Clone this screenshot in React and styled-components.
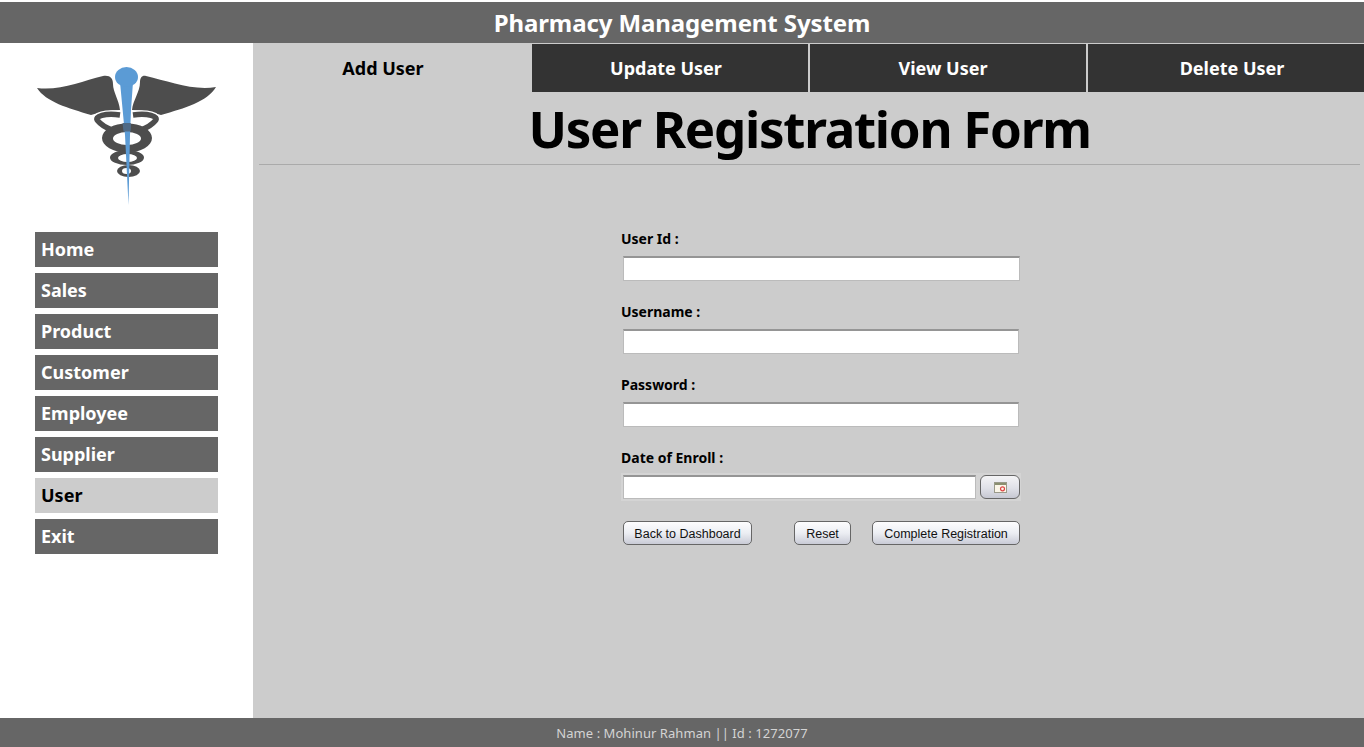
import React from "react";
import styled, { createGlobalStyle } from "styled-components";

const Global = createGlobalStyle`
  html, body { margin: 0; padding: 0; background: #fff; overflow: hidden; }
  * { box-sizing: border-box; }
`;
const font = `"Noto Sans", "DejaVu Sans", sans-serif`;

const Page = styled.div`
  width: 1364px; height: 747px; padding-top: 2px;
  display: flex; flex-direction: column;
  font-family: ${font};
`;
const Header = styled.header`
  height: 41px; flex: none; background: #666; color: #fff;
  display: flex; align-items: center; justify-content: center;
  font-size: 24px; letter-spacing: -0.1px; font-weight: 700;
`;
const Body = styled.div`flex: 1; display: flex; min-height: 0;`;
const Sidebar = styled.aside`
  width: 253px; flex: none; background: #fff;
  display: flex; flex-direction: column; padding: 24px 35px 0;
`;
const LogoSvg = styled.svg`
  display: block; width: 180px; height: 140px; margin: 0 0 25px 1px; flex: none;
`;
const Nav = styled.nav`display: flex; flex-direction: column; gap: 6px;`;
const NavItem = styled.div`
  width: 183px; height: 35px; padding: 0 0 2px 6px;
  display: flex; align-items: center;
  font-size: 18px; font-weight: 700;
  background: ${p => (p.$active ? "#ccc" : "#666")};
  color: ${p => (p.$active ? "#000" : "#fff")};
`;
const Main = styled.main`
  flex: 1; background: #ccc; display: flex; flex-direction: column; min-width: 0;
`;
const Tabs = styled.div`
  display: grid; grid-template-columns: 277px 276px 276px 276px; column-gap: 2px;
  height: 48px; margin-top: 1px; flex: none;
  & > :first-child { margin-right: -2px; }
`;
const Tab = styled.div`
  display: flex; align-items: center; justify-content: center;
  font-size: 18px; font-weight: 700;
  background: ${p => (p.$active ? "#ccc" : "#333")};
  color: ${p => (p.$active ? "#000" : "#fff")};
  padding: ${p => p.$pad || "0"};
`;
const Title = styled.h1`
  margin: 0 4px 0 6px; height: 73px; padding: 4px 0 0; flex: none;
  border-bottom: 1px solid #aaa;
  font-size: 51px; letter-spacing: -1.27px; line-height: 64px; font-weight: 700; color: #000; text-align: center;
`;
const Form = styled.form`
  width: 400px; margin: 65px 0 0 368px;
  display: flex; flex-direction: column;
`;
const Field = styled.div`
  display: flex; flex-direction: column; height: 73px;
`;
const Label = styled.label`
  font-size: 14px; font-weight: 700; color: #000; line-height: 17px; height: 17px;
`;
const Input = styled.div`
  height: 25px; width: ${p => p.$w || 397}px; margin: 9px 0 0 2px;
  background: #fff; border: 1px solid #bbb; border-top: 2px solid #959595;
`;
const DateRow = styled.div`
  display: flex; align-items: center; justify-content: space-between;
  height: 28px; width: 400px; margin-top: 7px; padding: 0 1px 0 2px; background: #d4d4d4;
`;
const DateInput = styled.div`
  width: 353px; height: 24px; background: #fff;
  border: 1px solid #bbb; border-top: 2px solid #959595;
`;
const IconButton = styled.button`
  width: 40px; height: 24px; padding: 0; display: flex; align-items: center; justify-content: center;
  border: 1px solid #666; border-radius: 6px;
  background: linear-gradient(#f4f4f6, #e0e1e8 55%, #c6c8d2);
`;
const Actions = styled.div`
  display: flex; margin: 20px 0 0 2px; width: 397px;
`;
const Btn = styled.button`
  height: 24px; width: ${p => p.$w}px; margin-left: ${p => p.$ml || 0}px; padding: 1px 0 0;
  border: 1px solid #666; border-radius: 5px;
  background: linear-gradient(#fdfdfe, #eceef3 50%, #c9cbd6);
  font-family: "Liberation Sans", Arial, sans-serif; font-size: 12.5px; color: #111;
`;
const Footer = styled.footer`
  height: 29px; flex: none; background: #666; color: #d4d4d4;
  display: flex; align-items: center; justify-content: center;
  font-size: 13px; padding-top: 1px; letter-spacing: 0.05px;
`;

const bowl = "M120 115C106 113 93 116 98 121C102 126 107 128 112 130M133 115C147 113 160 116 155 121C151 126 146 128 141 130";

const Logo = () => (
  <LogoSvg viewBox="36 67 180 140" aria-label="logo">
    <path fill="#4d4d4d" d="M37 88C60 91 82 81 103 76C110 75 113 78 113 84C113 92 119 100 120 110C110 110 100 112 91 115C68 108 46 102 37 88Z" />
    <path fill="#4d4d4d" d="M216 87C193 91 168 81 146 76C142 75 140 78 140 82C140 92 133 100 132 110C142 110 152 112 161 115C185 108 207 102 216 87Z" />
    <path fill="none" stroke="#fff" strokeWidth="8" d={bowl} />
    <path fill="none" stroke="#4d4d4d" strokeWidth="5.5" d={bowl} />
    <path fill="#4d4d4d" fillRule="evenodd" d="M102 138a25 14.5 0 1 0 50 0a25 14.5 0 1 0 -50 0ZM113 138.500a14 6.500 0 1 1 28 0a14 6.500 0 1 1 -28 0Z" />
    <path fill="#4d4d4d" fillRule="evenodd" d="M110 157.500a17 7.500 0 1 0 34 0a17 7.500 0 1 0 -34 0ZM118 158a9.500 4 0 1 1 19 0a9.500 4 0 1 1 -19 0Z" />
    <path fill="#4d4d4d" fillRule="evenodd" d="M117 171a11.500 6 0 1 0 23 0a11.500 6 0 1 0 -23 0ZM122 171a4.500 3 0 1 1 9 0a4.500 3 0 1 1 -9 0Z" />
    <path fill="#5b9bd5" d="M120 82H133L131 110L130 135L128.500 205L125 135Z" />
    <path fill="#4f6a86" d="M122.500 123H130.800L130.300 131.500H123.500Z" />
    <ellipse cx="126.500" cy="77" rx="11.500" ry="10" fill="#5b9bd5" />
  </LogoSvg>
);

const CalIcon = () => (
  <svg width="13" height="11" viewBox="0 0 13 11">
    <rect x="0.5" y="0.5" width="12" height="10" fill="#fbf6e8" stroke="#9a9a8a" />
    <rect x="1" y="1" width="11" height="2" fill="#8a8f70" />
    <circle cx="8.5" cy="6.8" r="2" fill="none" stroke="#d44" strokeWidth="1.2" />
  </svg>
);

const items = ["Home", "Sales", "Product", "Customer", "Employee", "Supplier", "User", "Exit"];

export default function App() {
  return (
    <Page>
      <Global />
      <Header>Pharmacy Management System</Header>
      <Body>
        <Sidebar>
          <Logo />
          <Nav>
            {items.map(i => <NavItem key={i} $active={i === "User"}>{i}</NavItem>)}
          </Nav>
        </Sidebar>
        <Main>
          <Tabs>
            <Tab $active $pad="0 19px 0 0">Add User</Tab>
            <Tab $pad="0 8px 0 0">Update User</Tab>
            <Tab $pad="0 10px 0 0">View User</Tab>
            <Tab $pad="0 0 0 12px">Delete User</Tab>
          </Tabs>
          <Title>User Registration Form</Title>
          <Form>
            <Field><Label>User Id :</Label><Input /></Field>
            <Field><Label>Username :</Label><Input $w={396} /></Field>
            <Field><Label>Password :</Label><Input $w={396} /></Field>
            <Label>Date of Enroll :</Label>
            <DateRow>
              <DateInput />
              <IconButton type="button"><CalIcon /></IconButton>
            </DateRow>
            <Actions>
              <Btn type="button" $w={129}>Back to Dashboard</Btn>
              <Btn type="button" $w={57} $ml={42}>Reset</Btn>
              <Btn type="button" $w={148} $ml={21}>Complete Registration</Btn>
            </Actions>
          </Form>
        </Main>
      </Body>
      <Footer>Name : Mohinur Rahman || Id : 1272077</Footer>
    </Page>
  );
}
